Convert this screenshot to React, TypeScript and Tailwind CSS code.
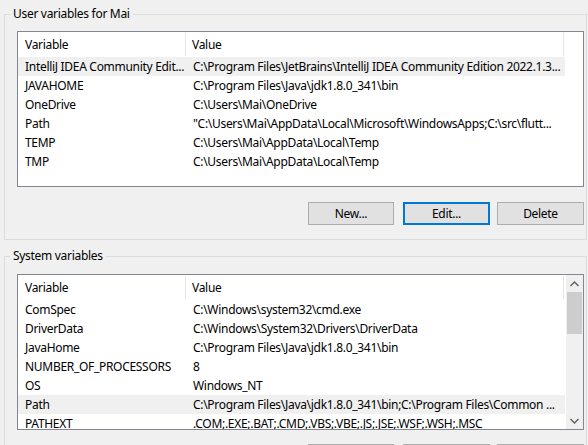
import {JSX} from "react";

type Row = [string, string];

const userVars: Row[] = [
    ["IntelliJ IDEA Community Edit...", "C:\\Program Files\\JetBrains\\IntelliJ IDEA Community Edition 2022.1.3..."],
    ["JAVAHOME", "C:\\Program Files\\Java\\jdk1.8.0_341\\bin"],
    ["OneDrive", "C:\\Users\\Mai\\OneDrive"],
    ["Path", "\"C:\\Users\\Mai\\AppData\\Local\\Microsoft\\WindowsApps;C:\\src\\flutt..."],
    ["TEMP", "C:\\Users\\Mai\\AppData\\Local\\Temp"],
    ["TMP", "C:\\Users\\Mai\\AppData\\Local\\Temp"],
];

const systemVars: Row[] = [
    ["ComSpec", "C:\\Windows\\system32\\cmd.exe"],
    ["DriverData", "C:\\Windows\\System32\\Drivers\\DriverData"],
    ["JavaHome", "C:\\Program Files\\Java\\jdk1.8.0_341\\bin"],
    ["NUMBER_OF_PROCESSORS", "8"],
    ["OS", "Windows_NT"],
    ["Path", "C:\\Program Files\\Java\\jdk1.8.0_341\\bin;C:\\Program Files\\Common ..."],
    ["PATHEXT", ".COM;.EXE;.BAT;.CMD;.VBS;.VBE;.JS;.JSE;.WSF;.WSH;.MSC"],
];

function VarList({rows, selected, scroll}: {rows: Row[]; selected: number; scroll?: boolean}): JSX.Element {
    return (
        <div className="ml-[12px] mr-[2px] h-[156px] border border-[#828790] bg-white flex overflow-hidden">
            <div className="w-[547px] flex flex-col">
                <div className="h-[25px] flex items-center shrink-0">
                    <div className="w-[168px] h-[23px] pl-[7px] flex items-center border-r border-[#e5e5e5]">Variable</div>
                    <div className="w-[378px] h-[23px] pl-[6px] flex items-center border-r border-[#e5e5e5]">Value</div>
                </div>
                {rows.map((r, i) => (
                    <div key={r[0]}
                         className={"h-[19px] shrink-0 flex items-center whitespace-nowrap " + (i === selected ? "bg-[#f0f0f0]" : "")}>
                        <div className="w-[169px] pl-[7px] overflow-hidden">{r[0]}</div>
                        <div className="w-[378px] pl-[6px] overflow-hidden">{r[1]}</div>
                    </div>
                ))}
            </div>
            {scroll ? (
                <div className="ml-[1px] w-[17px] bg-[#f0f0f0] flex flex-col">
                    <div className="h-[17px] flex items-center justify-center">
                        <svg width="9" height="6" viewBox="0 0 9 6">
                            <path d="M0.5 5 L4.5 1 L8.5 5" fill="none" stroke="#606060" strokeWidth="1.4"/>
                        </svg>
                    </div>
                    <div className="mx-[1px] h-[42px] bg-[#cdcdcd]"/>
                    <div className="flex-1"/>
                    <div className="h-[17px] flex items-center justify-center">
                        <svg width="9" height="6" viewBox="0 0 9 6">
                            <path d="M0.5 1 L4.5 5 L8.5 1" fill="none" stroke="#606060" strokeWidth="1.4"/>
                        </svg>
                    </div>
                </div>
            ) : null}
        </div>
    );
}

function Buttons({focused}: {focused?: boolean}): JSX.Element {
    const base = "h-[23px] bg-[#e1e1e1] flex items-center justify-center";
    return (
        <div className="flex pl-[303px]">
            <button className={base + " w-[86px] border border-[#adadad]"}>New...</button>
            <button className={base + " w-[87px] ml-[9px] " + (focused ? "border-2 border-[#0078d7]" : "border border-[#adadad]")}>Edit...</button>
            <button className={base + " w-[87px] ml-[7px] border border-[#adadad]"}>Delete</button>
        </div>
    );
}

export default function App(): JSX.Element {
    return (
        <div className="w-[588px] h-[445px] overflow-hidden bg-[#f0f0f0] pl-[4px] pr-[1px] pt-[6px] text-[12px] tracking-[-0.3px] text-black"
             style={{fontFamily: "'Noto Sans', 'Open Sans', sans-serif"}}>
            <fieldset className="border border-[#dcdcdc] pb-[14px]">
                <legend className="ml-[5px] px-[3px] leading-[16px]">User variables for Mai</legend>
                <div className="mt-[9px]">
                    <VarList rows={userVars} selected={0}/>
                </div>
                <div className="mt-[15px]">
                    <Buttons focused/>
                </div>
            </fieldset>
            <fieldset className="mt-[8px] border border-[#dcdcdc] pb-[14px]">
                <legend className="ml-[5px] px-[3px] leading-[16px]">System variables</legend>
                <div className="mt-[10px]">
                    <VarList rows={systemVars} selected={5} scroll/>
                </div>
                <div className="mt-[14px]">
                    <Buttons/>
                </div>
            </fieldset>
        </div>
    );
}
